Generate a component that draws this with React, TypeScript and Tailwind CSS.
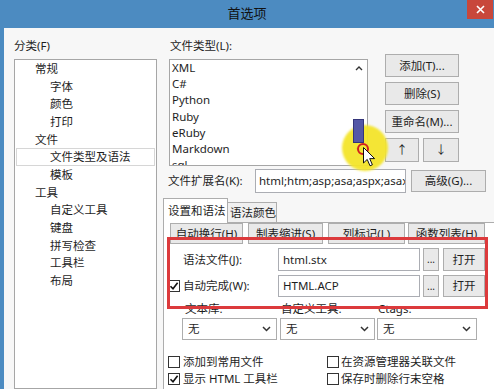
import React from 'react'

const font = "font-['Noto_Sans','Noto_Sans_CJK_SC',sans-serif]"

function Btn({ children, className = '' }: { children: React.ReactNode; className?: string }) {
  return (
    <div className={`flex items-center justify-center border border-[#adadad] bg-[#e9e9e9] whitespace-nowrap shrink-0 ${className}`}>
      {children}
    </div>
  )
}

function Check({ checked = false }: { checked?: boolean }) {
  return (
    <div className="w-[12px] h-[12px] border border-[#333] bg-white flex items-center justify-center shrink-0">
      {checked && (
        <svg width="10" height="10" viewBox="0 0 10 10">
          <path d="M1.5 5.2 L4 7.8 L8.6 1.8" fill="none" stroke="#111" strokeWidth="1.6" />
        </svg>
      )}
    </div>
  )
}

function Select({ className = '' }: { className?: string }) {
  return (
    <div className={`h-[22px] border border-[#adadad] bg-white flex items-center justify-between pl-[5px] pr-[5px] shrink-0 ${className}`}>
      <span>无</span>
      <svg width="9" height="6" viewBox="0 0 9 6">
        <path d="M1 1 L4.5 4.5 L8 1" fill="none" stroke="#333" strokeWidth="1.5" />
      </svg>
    </div>
  )
}

const tree: { label: string; level: number; selected?: boolean }[] = [
  { label: '常规', level: 1 },
  { label: '字体', level: 2 },
  { label: '颜色', level: 2 },
  { label: '打印', level: 2 },
  { label: '文件', level: 1 },
  { label: '文件类型及语法', level: 2, selected: true },
  { label: '模板', level: 2 },
  { label: '工具', level: 1 },
  { label: '自定义工具', level: 2 },
  { label: '键盘', level: 2 },
  { label: '拼写检查', level: 2 },
  { label: '工具栏', level: 2 },
  { label: '布局', level: 2 },
]

const fileTypes = ['XML', 'C#', 'Python', 'Ruby', 'eRuby', 'Markdown', 'sql']

export default function App() {
  return (
    <div className={`relative w-[494px] h-[389px] overflow-hidden bg-[#4c8bc1] flex flex-col text-[11.5px] text-[#1e1e1e] ${font}`}>
      {/* title bar */}
      <div className="h-[28px] flex items-center justify-center shrink-0">
        <span className="text-[13px] text-[#111] -mt-[1px]">首选项</span>
      </div>
      <div className="absolute right-[1px] top-0 w-[26px] h-[19px] bg-[#c8473b] flex items-center justify-center">
        <svg width="9" height="9" viewBox="0 0 9 9">
          <path d="M1 1 L8 8 M8 1 L1 8" stroke="#fff" strokeWidth="1.6" />
        </svg>
      </div>

      <div className="flex-1 ml-[4px] bg-[#f7f7f7] flex pl-[10px] pt-[8px]">
        {/* left column */}
        <div className="w-[143px] flex flex-col shrink-0">
          <div className="h-[20px] leading-[20px] mb-[3px]">分类(F)</div>
          <div className="h-[330px] border border-[#a6a6a6] bg-white">
            {tree.map((t) => (
              <div
                key={t.label}
                className={`h-[17.67px] leading-[16px] mx-[1px] ${t.level === 1 ? 'pl-[18px]' : 'pl-[33px]'} ${t.selected ? 'border border-[#d6d6d6]' : 'border border-transparent'}`}
              >
                {t.label}
              </div>
            ))}
          </div>
        </div>

        {/* right part */}
        <div className="ml-[6px] flex-1 flex flex-col">
          <div className="flex pl-[5px]">
            <div className="w-[200px] flex flex-col shrink-0">
              <div className="h-[20px] leading-[20px] pl-[2px] mb-[3px]">文件类型(L):</div>
              <div className="relative ml-[1px] w-[199px] h-[107px] border border-[#a6a6a6] bg-white overflow-hidden">
                <div className="pl-[2px]">
                  {fileTypes.map((f) => (
                    <div key={f} className="h-[16.2px] leading-[16px]">{f}</div>
                  ))}
                </div>
                <div className="absolute right-[1px] top-0 bottom-0 w-[15px] flex flex-col items-center">
                  <svg className="mt-[6px]" width="8" height="5" viewBox="0 0 8 5">
                    <path d="M1 4 L4 1 L7 4" fill="none" stroke="#333" strokeWidth="1.4" />
                  </svg>
                  <div className="relative z-20 mt-[48px] w-[11px] h-[24px] bg-[#5457a6] border border-[#34357a]" />
                  <svg className="mt-[4px]" width="8" height="5" viewBox="0 0 8 5">
                    <path d="M1 1 L4 4 L7 1" fill="none" stroke="#333" strokeWidth="1.4" />
                  </svg>
                </div>
              </div>
            </div>
            <div className="ml-[17px] pt-[18px] flex flex-col">
              <Btn className="w-[74px] h-[23px] mb-[5px]">添加(T)...</Btn>
              <Btn className="w-[74px] h-[23px] mb-[5px]">删除(S)</Btn>
              <Btn className="w-[74px] h-[23px] mb-[5px]">重命名(M)...</Btn>
              <div className="flex gap-[4px]">
                <Btn className="w-[34px] h-[24px]">↑</Btn>
                <Btn className="w-[36px] h-[24px]">↓</Btn>
              </div>
            </div>
          </div>

          {/* extension row */}
          <div className="mt-[3px] pl-[5px] h-[24px] flex items-center">
            <div className="w-[87px] shrink-0">文件扩展名(K):</div>
            <div className="w-[151px] h-[24px] border border-[#abadb3] bg-white pl-[3px] leading-[22px] overflow-hidden whitespace-nowrap shrink-0">
              html;htm;asp;asa;aspx;asax;s
            </div>
            <Btn className="ml-[5px] w-[75px] h-[22px]">高级(G)...</Btn>
          </div>

          {/* tabs */}
          <div className="mt-[5px] h-[24px] flex items-end">
            <div className="relative z-10 -mb-px w-[65px] h-[25px] bg-white border border-b-0 border-[#adadad] pl-[4px] leading-[24px] whitespace-nowrap">
              设置和语法
            </div>
            <div className="w-[49px] h-[20px] bg-[#f0f0f0] border-t border-r border-[#adadad] pl-[2px] leading-[19px] whitespace-nowrap">
              语法颜色
            </div>
          </div>
          <div className="flex-1 border-l border-t border-[#adadad] bg-white flex flex-col">
            <div className="flex pl-[6px] h-[21px]">
              <Btn className="w-[73px] h-[21px]">自动换行(H)</Btn>
              <Btn className="ml-[5px] w-[75px] h-[21px]">制表缩进(S)</Btn>
              <Btn className="ml-[5px] w-[77px] h-[21px]">列标记(L)</Btn>
              <Btn className="ml-[3px] w-[77px] h-[21px]">函数列表(H)</Btn>
            </div>

            <div className="mt-[4px] h-[23px] flex items-center pl-[4px]">
              <div className="w-[15px] shrink-0" />
              <div className="w-[95px] shrink-0">语法文件(J):</div>
              <div className="w-[142px] h-[23px] border border-[#abadb3] bg-white pl-[4px] leading-[21px] shrink-0">html.stx</div>
              <Btn className="ml-[3px] w-[16px] h-[23px] text-[10px]">...</Btn>
              <Btn className="ml-[4px] w-[42px] h-[23px]">打开</Btn>
            </div>
            <div className="mt-[4px] h-[22px] flex items-center pl-[4px]">
              <div className="w-[15px] shrink-0">
                <Check checked />
              </div>
              <div className="w-[95px] shrink-0">自动完成(W):</div>
              <div className="w-[142px] h-[22px] border border-[#abadb3] bg-white pl-[4px] leading-[20px] shrink-0">HTML.ACP</div>
              <Btn className="ml-[3px] w-[16px] h-[22px] text-[10px]">...</Btn>
              <Btn className="ml-[4px] w-[42px] h-[22px]">打开</Btn>
            </div>

            <div className="mt-[4px] h-[16px] leading-[16px] flex pl-[18px]">
              <div className="w-[95px] pl-[3px] shrink-0">文本库:</div>
              <div className="ml-[3px] w-[95px] pl-[1px] shrink-0">自定义工具:</div>
              <div className="ml-[2px] w-[100px] pl-[1px] shrink-0">Ctags:</div>
            </div>
            <div className="mt-[1px] flex pl-[18px]">
              <Select className="w-[95px]" />
              <Select className="ml-[3px] w-[95px]" />
              <Select className="ml-[2px] w-[100px]" />
            </div>

            <div className="mt-[14px] h-[16px] flex items-center pl-[4px]">
              <div className="w-[159px] flex items-center gap-[3px] shrink-0">
                <Check />
                <span>添加到常用文件</span>
              </div>
              <div className="flex items-center gap-[2px]">
                <Check />
                <span>在资源管理器关联文件</span>
              </div>
            </div>
            <div className="mt-[1px] h-[16px] flex items-center pl-[4px]">
              <div className="w-[159px] flex items-center gap-[3px] shrink-0">
                <Check checked />
                <span>显示 HTML 工具栏</span>
              </div>
              <div className="flex items-center gap-[2px]">
                <Check />
                <span>保存时删除行末空格</span>
              </div>
            </div>
          </div>
        </div>
      </div>

      {/* annotation overlays */}
      <div className="absolute left-[167px] top-[237px] w-[321px] h-[72px] border-[3px] border-[#dc3a3c]" />
      <div className="absolute z-10 left-[342px] top-[125px] w-[46px] h-[46px] rounded-full bg-[#f4e52b] blur-[1px] opacity-95" />
      <div className="absolute z-30 left-[357px] top-[143px] w-[12px] h-[12px] rounded-full border-[2.5px] border-[#d11f1f]" />
      <svg className="absolute z-40 left-[363px] top-[147px]" width="13" height="20" viewBox="0 0 13 20">
        <path d="M0.5 0.5 L0.5 16 L4.2 12.4 L7 18.8 L9.4 17.8 L6.7 11.6 L11.6 11.6 Z" fill="#fff" stroke="#111" strokeWidth="1" />
      </svg>
    </div>
  )
}
